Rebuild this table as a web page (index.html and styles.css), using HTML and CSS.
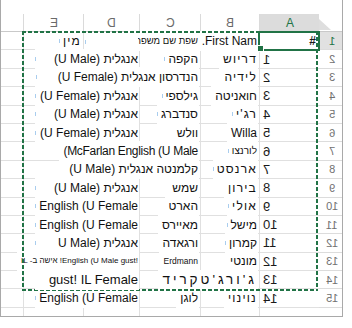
FILE: index.html
```html
<!DOCTYPE html>
<html lang="he">
<head>
<meta charset="utf-8">
<title>Sheet</title>
<link rel="stylesheet" href="styles.css">
</head>
<body>
<div class="frame">
  <div class="sheet">
    <div class="corner"><svg width="12" height="11" viewBox="0 0 12 11"><path d="M0 0 L0 11 L12 11 Z" fill="#dedede"/></svg></div>
    <div class="ch sel"><span class="n">A</span></div>
    <div class="ch"><span class="n">B</span></div>
    <div class="ch"><span class="n">C</span></div>
    <div class="ch"><span class="n">D</span></div>
    <div class="ch"><span class="n">E</span></div>
    <div class="ch last"></div>

    <div class="rh sel"><span class="n">1</span></div>
    <div class="c a active"><span class="hash">#</span></div>
    <div class="c"><span class="t l">.First Nam</span></div>
    <div class="c"><span class="t xs">שפת שם משפחה</span></div>
    <div class="c"><span class="t k blank"></span></div>
    <div class="c"><span class="t k sp">מין</span></div>
    <div class="c last"></div>

    <div class="rh"><span class="n">2</span></div>
    <div class="c a"><span class="n">1</span></div>
    <div class="c"><span class="t sp">דריוש</span></div>
    <div class="c"><span class="t k">הקפה</span></div>
    <div class="c d"><span class="t k w">אנגלית (U Male)</span></div>
    <div class="c"></div>
    <div class="c last"></div>

    <div class="rh"><span class="n">3</span></div>
    <div class="c a"><span class="n">2</span></div>
    <div class="c"><span class="t sp">לידיה</span></div>
    <div class="c"><span class="t k w2">הנדרסון אנגלית (U Female)</span></div>
    <div class="c"></div>
    <div class="c"></div>
    <div class="c last"></div>

    <div class="rh"><span class="n">4</span></div>
    <div class="c a"><span class="n">3</span></div>
    <div class="c"><span class="t">חואניטה</span></div>
    <div class="c"><span class="t k">גילספי</span></div>
    <div class="c d"><span class="t k w">אנגלית (U Female)</span></div>
    <div class="c"></div>
    <div class="c last"></div>

    <div class="rh"><span class="n">5</span></div>
    <div class="c a"><span class="n">4</span></div>
    <div class="c"><span class="t k sp">רג'י</span></div>
    <div class="c"><span class="t k">סנדברג</span></div>
    <div class="c d"><span class="t k w">אנגלית (U Male)</span></div>
    <div class="c"></div>
    <div class="c last"></div>

    <div class="rh"><span class="n">6</span></div>
    <div class="c a"><span class="n">5</span></div>
    <div class="c"><span class="t l">Willa</span></div>
    <div class="c"><span class="t">וולש</span></div>
    <div class="c d"><span class="t k w">אנגלית (U Female)</span></div>
    <div class="c"></div>
    <div class="c last"></div>

    <div class="rh"><span class="n">7</span></div>
    <div class="c a"><span class="n">6</span></div>
    <div class="c"><span class="t k sm">לורנצו</span></div>
    <div class="c"><span class="t l mc">(McFarlan English (U Male</span></div>
    <div class="c"></div>
    <div class="c"></div>
    <div class="c last"></div>

    <div class="rh"><span class="n">8</span></div>
    <div class="c a"><span class="n">7</span></div>
    <div class="c"><span class="t k sp">ארנסט</span></div>
    <div class="c"><span class="t">קלמנטה אנגלית (U Male)</span></div>
    <div class="c"></div>
    <div class="c"></div>
    <div class="c last"></div>

    <div class="rh"><span class="n">9</span></div>
    <div class="c a"><span class="n">8</span></div>
    <div class="c"><span class="t sp">בירון</span></div>
    <div class="c"><span class="t">שמש</span></div>
    <div class="c d"><span class="t k w">אנגלית (U Male)</span></div>
    <div class="c"></div>
    <div class="c last"></div>

    <div class="rh"><span class="n">10</span></div>
    <div class="c a"><span class="n">9</span></div>
    <div class="c"><span class="t k sp">אולי</span></div>
    <div class="c"><span class="t">הארט</span></div>
    <div class="c d"><span class="t k w l">English (U Female</span></div>
    <div class="c"></div>
    <div class="c last"></div>

    <div class="rh"><span class="n">11</span></div>
    <div class="c a"><span class="n">10</span></div>
    <div class="c"><span class="t k">מישל</span></div>
    <div class="c"><span class="t">מאיירס</span></div>
    <div class="c d"><span class="t k w l">English (U Female</span></div>
    <div class="c"></div>
    <div class="c last"></div>

    <div class="rh"><span class="n">12</span></div>
    <div class="c a"><span class="n">11</span></div>
    <div class="c"><span class="t k">קמרון</span></div>
    <div class="c"><span class="t">ורגאדה</span></div>
    <div class="c d"><span class="t k w">אנגלית (U Male</span></div>
    <div class="c"></div>
    <div class="c last"></div>

    <div class="rh"><span class="n">13</span></div>
    <div class="c a"><span class="n">12</span></div>
    <div class="c"><span class="t">מונטי</span></div>
    <div class="c"><span class="t tiny l">Erdmann</span></div>
    <div class="c d"><span class="t tiny mix"><bdi dir="ltr">!English (U Male gust!</bdi> אישה ב- IL</span></div>
    <div class="c"></div>
    <div class="c last"></div>

    <div class="rh"><span class="n">14</span></div>
    <div class="c a"><span class="n">13</span></div>
    <div class="c"><span class="t wide">ג'ורג'טקריד</span></div>
    <div class="c"></div>
    <div class="c d"><span class="t w big l top">gust! IL Female</span></div>
    <div class="c"></div>
    <div class="c last"></div>

    <div class="rh"><span class="n">15</span></div>
    <div class="c a"><span class="n">14</span></div>
    <div class="c"><span class="t sp">נוינוי</span></div>
    <div class="c"><span class="t">לוגן</span></div>
    <div class="c d"><span class="t k w l">English (U Female</span></div>
    <div class="c"></div>
    <div class="c last"></div>

    <div class="rh"></div>
    <div class="c a"></div>
    <div class="c"></div>
    <div class="c"></div>
    <div class="c"></div>
    <div class="c"></div>
    <div class="c last"></div>
  </div>
  <div class="marquee"></div>
</div>
</body>
</html>
```

FILE: styles.css
```css
html, body {
  margin: 0;
  padding: 0;
  background: #ffffff;
}

body {
  font-family: "Liberation Sans", "DejaVu Sans", Arial, sans-serif;
  font-size: 12px;
  color: #111111;
}

.frame {
  position: relative;
  width: 341px;
  height: 316px;
  border-left: 1px solid #a9a9a9;
  border-right: 1px solid #a9a9a9;
  border-bottom: 1px solid #a9a9a9;
  overflow: hidden;
}

.sheet {
  display: grid;
  direction: rtl;
  margin-top: 14px;
  grid-template-columns: 23px 60px 59px 61px 56px 60px 22px;
  grid-template-rows: 18px repeat(16, 18.4px);
}

.corner {
  display: flex;
  align-items: flex-end;
  justify-content: flex-end;
  padding: 0 2px 1px 0;
  border-bottom: 1px solid #c9c9c9;
  box-sizing: border-box;
}

.corner svg {
  display: block;
  margin-right: 2px;
}

.ch {
  display: flex;
  align-items: center;
  justify-content: center;
  box-sizing: border-box;
  border-left: 1px solid #dadada;
  border-bottom: 1px solid #c9c9c9;
  color: #6a6a6a;
  font-size: 12px;
}

.ch.sel {
  background: #dcdcdc;
  color: #217346;
}

.ch.last {
  border-left: none;
}

.n {
  display: inline-block;
  transform: scaleX(-1);
}

.rh {
  display: flex;
  align-items: center;
  justify-content: center;
  box-sizing: border-box;
  border-bottom: 1px solid #dcdcdc;
  color: #707070;
  font-size: 11px;
  padding-left: 3px;
}

.rh.sel {
  background: #e1e1e1;
  color: #217346;
}

.c {
  display: flex;
  align-items: center;
  justify-content: flex-start;
  box-sizing: border-box;
  min-width: 0;
  border-left: 1px solid #e0e0e0;
  border-bottom: 1px solid #e0e0e0;
  padding-right: 1px;
  white-space: nowrap;
}

.c.last {
  border-left: none;
}

.c.a {
  justify-content: flex-end;
  padding-left: 3px;
  font-size: 13px;
  color: #1a1a1a;
}

.c.a.active {
  position: relative;
  z-index: 3;
  justify-content: flex-start;
  padding-right: 3px;
  outline: 2px solid #217346;
  outline-offset: -1px;
}

.c.a.active::after {
  content: "";
  position: absolute;
  left: -3px;
  bottom: -3px;
  width: 5px;
  height: 5px;
  background: #217346;
  border: 1px solid #ffffff;
}

.hash {
  font-weight: bold;
  font-size: 12px;
}

.c.d {
  padding-right: 0;
}

.t {
  display: inline-block;
  position: relative;
  z-index: 1;
  background: #ffffff;
  line-height: 20px;
  padding: 0 1px 0 4px;
  white-space: nowrap;
}

.t.l {
  direction: ltr;
  unicode-bidi: isolate;
  text-align: right;
}

.t.k::before {
  content: "";
  position: absolute;
  left: 0;
  top: 8px;
  width: 1px;
  height: 4px;
  background: #a9cdee;
}

.t.w {
  min-width: 99px;
}

.t.w2 {
  min-width: 158px;
}

.t.blank {
  min-width: 48px;
  height: 18px;
}

.t.sp {
  letter-spacing: 1.2px;
}

.t.xs {
  font-size: 9.5px;
}

.t.sm {
  font-size: 10px;
}

.t.mc {
  letter-spacing: -0.3px;
}

.t.tiny {
  font-size: 8.5px;
}

.t.mix {
  font-size: 8px;
}

.t.big {
  font-size: 13px;
}

.t.top {
  z-index: 2;
}

.t.wide {
  font-size: 13.5px;
  letter-spacing: 3px;
}

.marquee {
  position: absolute;
  z-index: 1;
  left: 21px;
  top: 31px;
  width: 296px;
  height: 260px;
  pointer-events: none;
  background:
    repeating-linear-gradient(90deg, #217346 0 4px, transparent 4px 6px) left top / 100% 2px no-repeat,
    repeating-linear-gradient(90deg, #217346 0 4px, transparent 4px 6px) left bottom / 100% 2px no-repeat,
    repeating-linear-gradient(180deg, #217346 0 4px, transparent 4px 6px) left top / 2px 100% no-repeat,
    repeating-linear-gradient(180deg, #217346 0 4px, transparent 4px 6px) right top / 2px 100% no-repeat;
}
```
